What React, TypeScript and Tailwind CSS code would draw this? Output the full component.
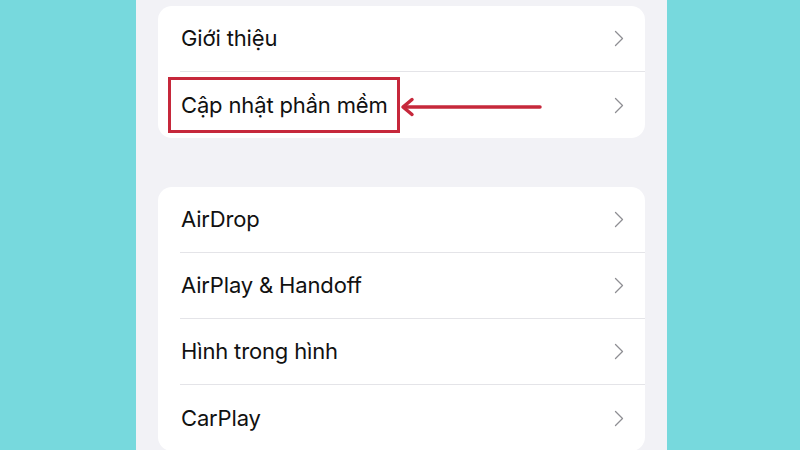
const groupOne = ["Giới thiệu", "Cập nhật phần mềm"];
const groupTwo = ["AirDrop", "AirPlay & Handoff", "Hình trong hình", "CarPlay"];

function Chevron() {
  return (
    <svg width="10" height="17" viewBox="0 0 10 17" fill="none">
      <path d="M1.5 1.5L8.5 8.5L1.5 15.5" stroke="#8e8e93" strokeWidth="1.3" strokeLinecap="round" strokeLinejoin="round" />
    </svg>
  );
}

function Row({ label, last }: { label: string; last?: boolean }) {
  return (
    <div className="h-[66px] pl-[22px]">
      <div className={`h-full flex items-center justify-between pl-px pr-[21px] ${last ? "" : "border-b border-[#e4e4e8]"}`}>
        <span className="text-[22px] text-[#111] tracking-[-0.15px]">{label}</span>
        <Chevron />
      </div>
    </div>
  );
}

export default function App() {
  return (
    <div
      className="relative w-[800px] h-[450px] overflow-hidden bg-[#77d9dd] pl-[136px]"
      style={{ fontFamily: "Inter, 'Noto Sans', sans-serif" }}
    >
      {/* Phone screen */}
      <div className="w-[531px] h-full bg-[#f2f2f6] pt-[6px] px-[22px] flex flex-col">
        <div className="bg-white rounded-[14px]">
          {groupOne.map((l, i) => (
            <Row key={l} label={l} last={i === groupOne.length - 1} />
          ))}
        </div>

        <div className="mt-[49px] bg-white rounded-[14px]">
          {groupTwo.map((l, i) => (
            <Row key={l} label={l} last={i === groupTwo.length - 1} />
          ))}
        </div>
      </div>

      {/* Annotation */}
      <div className="absolute left-[168px] top-[77px] w-[232px] h-[56px] border-[3px] border-[#c6283b]" />
      <svg className="absolute left-[398px] top-[96px]" width="146" height="22" viewBox="0 0 146 22" fill="none">
        <path d="M6 11H142" stroke="#c6283b" strokeWidth="3.5" strokeLinecap="round" />
        <path d="M14 3.5L5 11L14 18.5" stroke="#c6283b" strokeWidth="3.5" strokeLinecap="round" strokeLinejoin="round" />
      </svg>
    </div>
  );
}
